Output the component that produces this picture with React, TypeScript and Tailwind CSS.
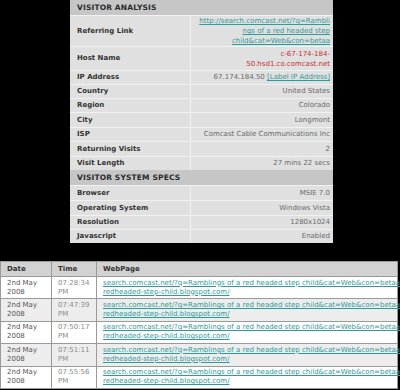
const font = { fontFamily: '"DejaVu Sans", Verdana, sans-serif' }

type Row = { label: string; value: React.ReactNode; h: string }

const analysis: Row[] = [
    {
        label: 'Referring Link',
        h: 'h-[31px]',
        value: (
            <a className="text-[#2f9a9a] underline leading-[10px]">
                http://search.comcast.net/?q=Rambli<br />ngs of a red headed step<br />child&amp;cat=Web&amp;con=betaa
            </a>
        )
    },
    {
        label: 'Host Name',
        h: 'h-[24px]',
        value: (
            <span className="text-[#c43232] leading-[10px]">
                c-67-174-184-<br />50.hsd1.co.comcast.net
            </span>
        )
    },
    {
        label: 'IP Address',
        h: 'h-[14px]',
        value: (
            <span>
                67.174.184.50 <a className="text-[#2f9a9a] underline">[Label IP Address]</a>
            </span>
        )
    },
    { label: 'Country', h: 'h-[14px]', value: 'United States' },
    { label: 'Region', h: 'h-[14px]', value: 'Colorado' },
    { label: 'City', h: 'h-[15px]', value: 'Longmont' },
    { label: 'ISP', h: 'h-[14px]', value: 'Comcast Cable Communications Inc' },
    { label: 'Returning Visits', h: 'h-[15px]', value: '2' },
    { label: 'Visit Length', h: 'h-[14px]', value: '27 mins 22 secs' }
]

const specs: Row[] = [
    { label: 'Browser', h: 'h-[15px]', value: 'MSIE 7.0' },
    { label: 'Operating System', h: 'h-[15px]', value: 'Windows Vista' },
    { label: 'Resolution', h: 'h-[14px]', value: '1280x1024' },
    { label: 'Javascript', h: 'h-[14px]', value: 'Enabled' }
]

const visits = ['07:28:34', '07:47:39', '07:50:17', '07:51:11', '07:55:56']

function SectionHeader({ title }: { title: string }) {
    return (
        <div className="flex h-[15px] items-center bg-[#c6c6c6] px-[7px] text-[7.5px] font-bold tracking-[0.02em] text-[#2a2a2a]">
            {title}
        </div>
    )
}

function InfoRow({ row }: { row: Row }) {
    return (
        <div className={`flex border-t border-[#f1f1f1] ${row.h}`}>
            <div className="flex w-[121px] items-center border-r border-[#f1f1f1] pl-[7px] text-[7px] font-bold text-[#333]">
                {row.label}
            </div>
            <div className="flex flex-1 items-center justify-end pr-[3px] text-right text-[7px] text-[#6a6a6a]">
                {row.value}
            </div>
        </div>
    )
}

export default function App() {
    return (
        <div className="h-[390px] w-[400px] overflow-hidden bg-black" style={font}>
            <div className="ml-[70px] w-[263px] bg-[#e0e0e0]">
                <SectionHeader title="VISITOR ANALYSIS" />
                {analysis.map((r) => (
                    <InfoRow key={r.label} row={r} />
                ))}
                <SectionHeader title="VISITOR SYSTEM SPECS" />
                {specs.map((r) => (
                    <InfoRow key={r.label} row={r} />
                ))}
            </div>

            <table className="mt-[18px] w-[398px] table-fixed border-collapse text-[7px]">
                <colgroup>
                    <col className="w-[51px]" />
                    <col className="w-[45px]" />
                    <col />
                </colgroup>
                <thead>
                    <tr className="h-[15px] bg-[#d2d2d2] text-left font-bold text-[#333]">
                        <th className="border border-[#9a9a9a] pl-[6px] font-bold">Date</th>
                        <th className="border border-[#9a9a9a] pl-[6px] font-bold">Time</th>
                        <th className="border border-[#9a9a9a] pl-[6px] font-bold">WebPage</th>
                    </tr>
                </thead>
                <tbody>
                    {visits.map((t, i) => (
                        <tr key={t} className={`h-[22.4px] ${i % 2 === 1 ? 'bg-[#ededed]' : 'bg-white'}`}>
                            <td className="border border-[#9a9a9a] pl-[6px] align-middle leading-[9px] text-[#555]">
                                2nd May<br />2008
                            </td>
                            <td className="border border-[#9a9a9a] pl-[6px] align-middle leading-[9px] text-[#8a8a8a]">
                                {t}<br />PM
                            </td>
                            <td className="border border-[#9a9a9a] pl-[6px] align-middle leading-[9px] whitespace-nowrap text-[#2f9a9a]">
                                <a className="underline">search.comcast.net/?q=Ramblings of a red headed step child&amp;cat=Web&amp;con=betaa</a>
                                <br />
                                <a className="underline">redheaded-step-child.blogspot.com/</a>
                            </td>
                        </tr>
                    ))}
                </tbody>
            </table>
        </div>
    )
}
